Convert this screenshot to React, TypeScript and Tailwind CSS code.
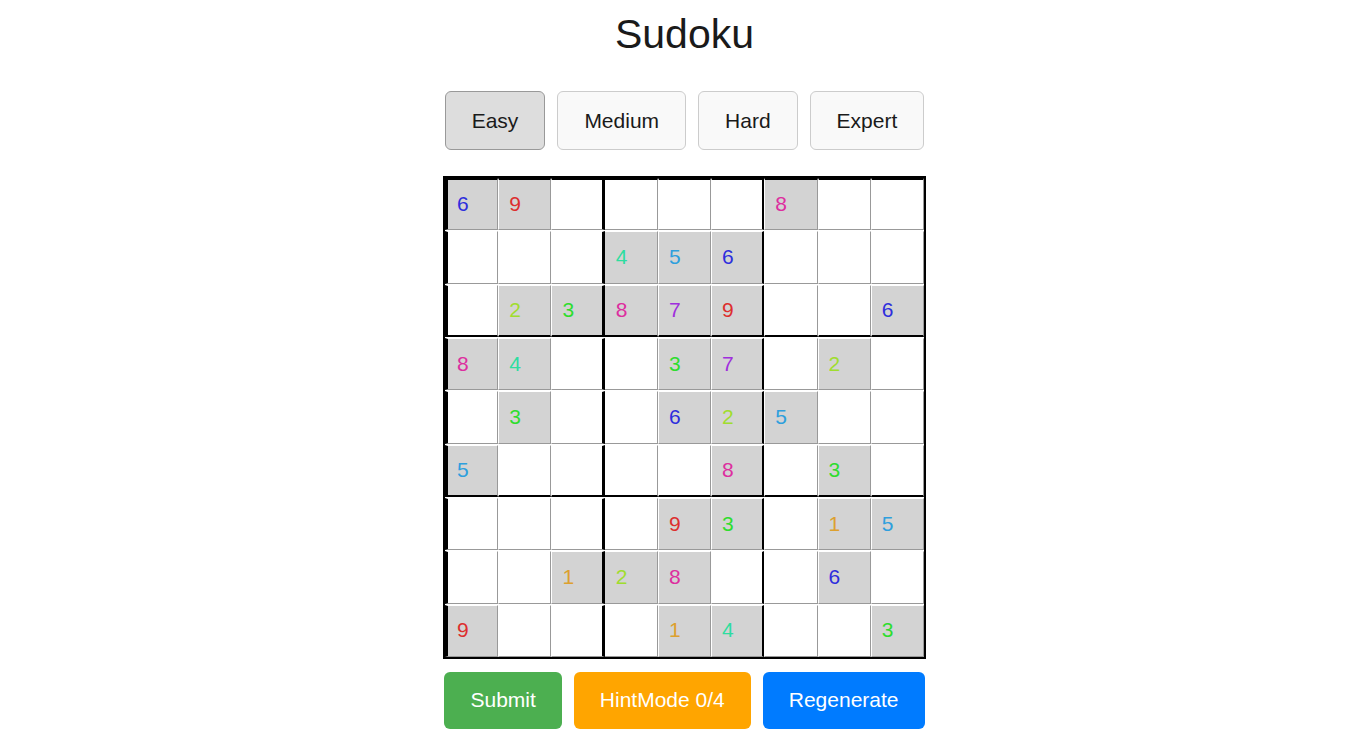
import { useState } from "react";

const puzzle = [
  "69....8..",
  "...456...",
  ".23879..6",
  "84..37.2.",
  ".3..625..",
  "5....8.3.",
  "....93.15",
  "..128..6.",
  "9...14..3",
];

const digitColors: Record<string, string> = {
  "1": "text-[#dda02e]",
  "2": "text-[#a0dd2e]",
  "3": "text-[#2edd2e]",
  "4": "text-[#2edda0]",
  "5": "text-[#2e9fdd]",
  "6": "text-[#2e2edd]",
  "7": "text-[#a02edd]",
  "8": "text-[#dd2e9f]",
  "9": "text-[#dd2e2e]",
};

const levels = ["Easy", "Medium", "Hard", "Expert"];

function Cell({ value, row, col }: { value: string; row: number; col: number }) {
  const given = value !== ".";
  const right =
    col === 2
      ? "border-r-3 border-r-black"
      : col === 5
        ? "border-r-2 border-r-black"
        : "border-r border-r-[#999]";
  const bottom =
    row === 2 || row === 5 ? "border-b-2 border-b-black" : "border-b border-b-[#999]";
  const left =
    col === 0
      ? "border-l-3 border-l-black pl-[9px]"
      : col === 3
        ? "pl-[11px]"
        : "border-l border-l-white pl-[10px]";
  const top = row === 0 ? "border-t-2 border-t-black" : "border-t border-t-white";
  return (
    <input
      aria-label={`Row ${row + 1}, column ${col + 1}`}
      defaultValue={given ? value : ""}
      readOnly={given}
      maxLength={1}
      className={`h-full w-full min-w-0 rounded-none pb-px outline-none ${
        given ? `bg-[#d3d3d3] ${digitColors[value]}` : "bg-white"
      } ${left} ${top} ${right} ${bottom}`}
    />
  );
}

export default function App() {
  const [level, setLevel] = useState("Easy");
  return (
    <main className="flex flex-col items-center bg-white pl-[3px] font-['Liberation_Sans',Arial,sans-serif] text-[21px] leading-6 text-[#1a1a1a]">
      <h1 className="pt-2 text-[41px] leading-[52px]">Sudoku</h1>
      <div className="mt-[31px] flex gap-3">
        {levels.map((name) => (
          <button
            key={name}
            type="button"
            aria-pressed={level === name}
            onClick={() => setLevel(name)}
            className={`rounded-md border px-[26px] py-4 leading-[25px] ${
              level === name
                ? "border-[#999] bg-[#ddd]"
                : "border-[#ccc] bg-[#f9f9f9]"
            }`}
          >
            {name}
          </button>
        ))}
      </div>
      <div className="mt-[26px] grid aspect-square w-full max-w-[483px] grid-cols-9 grid-rows-9 gap-y-px border-2 border-black">
        {puzzle.flatMap((line, row) =>
          line.split("").map((value, col) => (
            <Cell key={`${row}-${col}`} value={value} row={row} col={col} />
          )),
        )}
      </div>
      <div className="mt-[13px] flex gap-3 pb-4 text-white">
        <button type="button" className="rounded-md bg-[#4caf50] px-[26px] pt-[15px] pb-[17px] leading-[25px]">
          Submit
        </button>
        <button type="button" className="rounded-md bg-[#ffa500] px-[26px] pt-[15px] pb-[17px] leading-[25px]">
          HintMode 0/4
        </button>
        <button type="button" className="rounded-md bg-[#007bff] px-[26px] pt-[15px] pb-[17px] leading-[25px]">
          Regenerate
        </button>
      </div>
    </main>
  );
}
